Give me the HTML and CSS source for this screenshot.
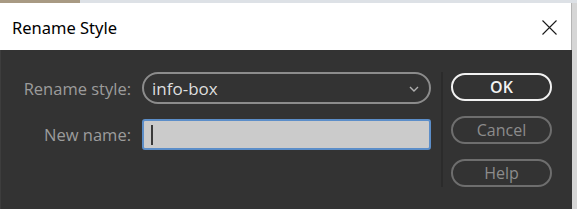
FILE: index.html
```html
<!DOCTYPE html>
<html>
<head>
<meta charset="utf-8">
<link rel="stylesheet" href="styles.css">
</head>
<body>
<div class="screen">
  <div class="topstrip"><div class="tan"></div><div class="pale"></div></div>
  <div class="main">
    <div class="dialog">
      <div class="titlebar">
        <span class="title">Rename Style</span>
        <svg class="close" width="15" height="15" viewBox="0 0 15 15"><path d="M0.5 0.5 L14.5 14.5 M14.5 0.5 L0.5 14.5" stroke="#1a1a1a" stroke-width="1.1" fill="none"/></svg>
      </div>
      <div class="body">
        <div class="form">
          <div class="row">
            <label class="label">Rename style:</label>
            <div class="select"><span>info-box</span>
              <svg class="chev" width="10" height="6" viewBox="0 0 10 6"><path d="M1 1 L5 5 L9 1" stroke="#b0b0b0" stroke-width="1.4" fill="none"/></svg>
            </div>
          </div>
          <div class="row row2">
            <label class="label">New name:</label>
            <div class="input"><span class="caret"></span></div>
          </div>
        </div>
        <div class="sep"></div>
        <div class="buttons">
          <button class="btn primary">OK</button>
          <button class="btn">Cancel</button>
          <button class="btn">Help</button>
        </div>
      </div>
    </div>
    <div class="edge"></div>
  </div>
</div>
</body>
</html>
```
FILE: styles.css
```css
html, body { margin: 0; padding: 0; }
body { width: 577px; height: 209px; overflow: hidden; background: #333; }
.screen { width: 577px; height: 209px; display: flex; flex-direction: column; }
.topstrip { height: 3px; display: flex; }
.tan { width: 80px; background: #a89a83; }
.pale { flex: 1; background: #dde1e6; }
.main { flex: 1; display: flex; }
.dialog { width: 572px; display: flex; flex-direction: column; }
.edge { flex: 1; background: #d6d6d6; }
.titlebar {
  height: 47px; background: #fff; display: flex; align-items: center;
  justify-content: space-between; padding: 0 14px 0 12px; box-sizing: border-box;
  border-right: 1px solid #b4b4b4;
}
.title { font-family: "Noto Sans", "Open Sans", sans-serif; font-size: 16.5px; color: #000; padding-top: 2px; }
.close { display: block; margin-top: 1px; }
.body {
  flex: 1; background: #333333; display: flex; padding: 22px 0 0 0;
  border-left: 1px solid #3d3d3d;
}
.form { display: flex; flex-direction: column; width: 430px; }
.row { display: flex; align-items: center; }
.row2 { margin-top: 15px; }
.label {
  width: 141px; text-align: right; font-family: "Open Sans", sans-serif; font-size: 16.5px;
  color: #9c9c9c; padding-right: 11px; box-sizing: border-box; white-space: nowrap;
}
.select {
  width: 289px; height: 32px; box-sizing: border-box; border: 2px solid #8c8c8c; border-radius: 16px;
  display: flex; align-items: center; justify-content: space-between; padding: 0 10px 0 8px;
  font-family: "Open Sans", sans-serif; font-size: 17px; color: #dedede;
}
.chev { display: block; margin-top: 1px; }
.input {
  width: 289px; height: 31px; box-sizing: border-box; background: #cbcbcb;
  border: 2px solid #5c8ec9; border-radius: 3px; display: flex; align-items: center; padding-left: 7px;
}
.caret { width: 2px; height: 20px; background: #3a3a3a; }
.sep { width: 2px; height: 115px; background: #2b2b2b; margin: 0 8px 0 10px; }
.buttons { display: flex; flex-direction: column; gap: 15px; padding-top: 1px; }
.btn {
  width: 101px; height: 28px; box-sizing: border-box; border-radius: 14px; background: transparent;
  border: 2px solid #6e6e6e; color: #8c8c8c; font-family: "Open Sans", sans-serif; font-size: 16px;
  padding: 0; margin: 0; line-height: 22px;
}
.btn.primary { border-color: #f2f2f2; color: #f2f2f2; font-weight: 600; }
```
